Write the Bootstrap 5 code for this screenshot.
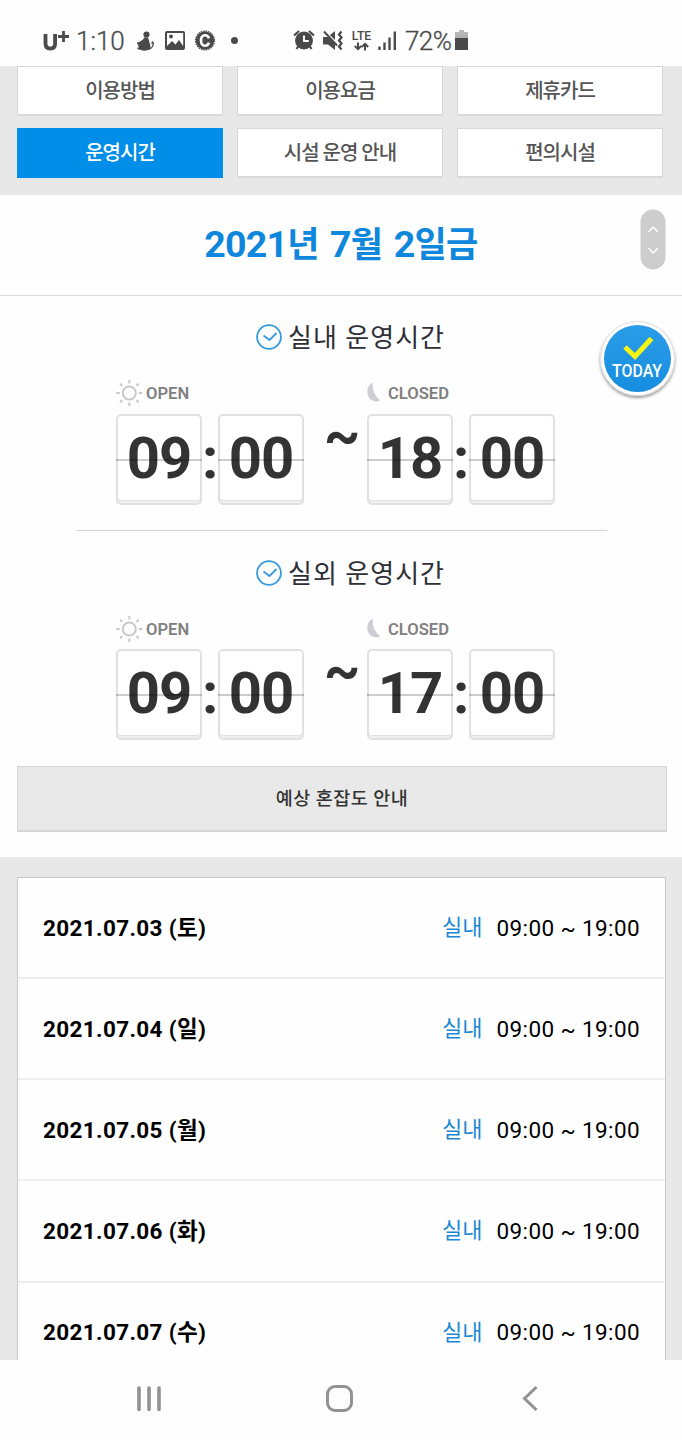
<!DOCTYPE html>
<html lang="ko">
<head>
<meta charset="utf-8">
<meta name="viewport" content="width=device-width, initial-scale=1">
<title>운영시간</title>
<link rel="stylesheet" href="https://cdn.jsdelivr.net/npm/bootstrap@5.3.0/dist/css/bootstrap.min.css">
<style>
body{font-family:Roboto,"Noto Sans CJK KR",sans-serif;background:#fefefe;color:#000;height:1440px;overflow:hidden;line-height:1}
svg{display:block;flex:none}
.status{height:66px;padding:16px 0 0 43px;color:#4a4a4a;white-space:nowrap}
.status>*{height:50px;flex:none}
.uplus{width:33px}
.clock{width:61px;font-size:26px;font-weight:300;-webkit-text-stroke:.3px #4a4a4a}
.pct{width:50px;font-size:26px;font-weight:300;letter-spacing:-.6px;-webkit-text-stroke:.3px #4a4a4a}
.tabs{height:129px;background:#e8e8e8;padding:0 18px 0 17px}
.tabgrid{display:grid;grid-template-columns:repeat(3,206px);column-gap:14px;row-gap:12px;grid-template-rows:50px 50px}
.tab{background:#fff;border:1px solid #d8d8d8;border-bottom-width:2px;border-radius:0;color:#555;font-size:20px;font-weight:500;letter-spacing:-1px;padding:1px 0 0;line-height:1;display:flex;align-items:center;justify-content:center}
.tab.on{background:#008ee8;border-color:#008ee8;color:#fff}
.daybar{height:101px;border-bottom:1px solid #d8d8d8}
.daybar h1{font-size:37.5px;font-weight:700;color:#0f87dc;letter-spacing:-.8px;word-spacing:2.8px;margin:0;line-height:1}
.daybar .ko{font-size:35px;letter-spacing:-.6px}
.spin{position:absolute;left:640px;top:14px}
.today{position:absolute;left:594px;top:20px}
.session{height:235px;width:531px;margin:0 auto 0 76px;padding-top:23px}
.session.first{border-bottom:1px solid #d4d4d4}
.session.second{padding-top:24px}
.session h2{font-size:26px;font-weight:400;color:#2f2f36;margin:0;height:36px;line-height:36px;letter-spacing:1px;padding-left:180px;gap:6px}
.session h2 span{padding-top:2px}
.lab{height:30px;margin-top:23px;font-size:16.6px;font-weight:600;color:#808080;padding-left:40px;}
.lab span{padding-top:2px}
.lab .o{width:221px}
.lab .gap-s{width:30px}
.flips{padding-left:40px;margin-top:6px;height:91px;font-weight:700;color:#333}
.flip{width:86px;height:91px;border:2px solid #e1e1e1;border-radius:5px;background:#fff;box-shadow:inset 0 -2px #efefef,inset 0 -3px #e1e1e1;font-size:58px;line-height:84px;text-align:center;letter-spacing:-1px;position:relative;flex:none}
.flip::after{content:"";position:absolute;left:-2px;right:-2px;top:43px;height:2px;background:rgba(0,0,0,.2)}
.colon{width:16px;font-size:58px;line-height:88px;text-align:center;flex:none}
.tilde{width:63px;flex:none;font-size:56px;line-height:42px;padding-left:20px}
.second .flips{margin-top:5px}
.crowd{margin:0 16px 25px 17px;height:66px;border:1px solid #d6d6d6;border-bottom-width:2px;background:#e9e9e9;border-radius:0;color:#333;font-size:18.500px;font-weight:500;line-height:1;width:650px;padding:1px 0 0;letter-spacing:.45px}
.days{height:503px;background:#e8e8e8;padding:20px 16px 0 17px;overflow:hidden}
.days .list-group{border:1px solid #c8c8c8;border-bottom:0}
.day{height:101.15px;border-bottom:2px solid #eceeef;background:#fefefe;padding:1px 25px 0 25px}
.day b{font-size:22.5px;font-weight:700;letter-spacing:.35px}
.day .in{font-size:22px;color:#1b88d4;margin-right:14px}
.day .hr{font-size:22.5px;letter-spacing:.38px}
.navb{height:80px;background:#fdfdfd}
</style>
</head>
<body>
<header class="status d-flex align-items-center">
  <span class="uplus"><svg width="30" height="50" viewBox="43 16 30 50"><path d="M45.500 34v9.500q0 5 4.800 5t4.800-5V34" fill="none" stroke="#4a4a4a" stroke-width="3.800"/><path d="M63.500 31v11M58 36.500h11" stroke="#4a4a4a" stroke-width="2.800"/></svg></span>
  <span class="clock d-flex align-items-center">1:10</span>
  <svg width="156" height="50" viewBox="137 16 156 50" fill="#4a4a4a">
    <circle cx="146.500" cy="34.500" r="3.100"/><path d="M143.500 37.500h4.500l1 3 1 4q1 2 0 3.500 2.500-1 2.500-4.500l-1.500.5 1.200-3 1.800 1.500q0 5-4 7-5 2-9 .5-4 0-4.500-3 1 1 2.500.5-1.500-1.500-.5-3.500l-1.700.5.200-2q2-.5 4-1.500l3-2.500z"/>
    <path fill-rule="evenodd" d="M167 31h16q2 0 2 2v15q0 2-2 2h-16q-2 0-2-2V33q0-2 2-2zm0 2v13l5-5 3.500 3.500L179 40l4.200 6V33z"/><circle cx="171" cy="36.500" r="1.900"/>
    <circle cx="205" cy="40.500" r="9.200"/><circle cx="205" cy="40.500" r="9.500" fill="none" stroke="#4a4a4a" stroke-width="1.200" stroke-dasharray="1.500 1"/>
    <path d="M209 38.300q-1-3-4-3-4 0-4 5.200t4 5.200q3 0 4-3" fill="none" stroke="#fff" stroke-width="2.600"/>
    <circle cx="234.500" cy="40.500" r="3.500"/>
  </svg>
  <svg width="112" height="50" viewBox="293 16 112 50" fill="#4a4a4a" stroke="#4a4a4a">
    <circle cx="304" cy="40.500" r="9" stroke="none"/><path d="M294 35.500l5-4.500M314 35.500l-5-4.500M298.500 46l-2 3M309.500 46l2 3" stroke-width="2.200"/><path d="M304 35.500v5.500h4.800" fill="none" stroke="#fff" stroke-width="1.900"/>
    <path stroke="none" d="M323 37h5l7 7v6l-7-5.500h-5zM330 35l5-4v9z"/><path d="M324 31.500L337 45.500" stroke-width="2"/><path d="M341.500 31.500l-2.500 3 2.500 3-2.500 3 2.500 3-2.500 3 2.500 3" fill="none" stroke-width="2.200"/>
    <text x="351.800" y="39.800" font-size="12.500" font-weight="500" stroke="none" font-family="Roboto" textLength="19.500" lengthAdjust="spacingAndGlyphs">LTE</text>
    <path d="M358 42.500v7M354.800 46l3.200 3.200 3.200-3.200M365 50.500v-7M361.800 47l3.200-3.200 3.200 3.200" fill="none" stroke-width="2"/>
    <path d="M379.500 46.500v3.500M384.500 42.500v7.500M389.500 37.500v12.500M394.800 31.500v18.500" stroke-width="2.400"/>
  </svg>
  <span class="pct d-flex align-items-center">72%</span>
  <svg width="14" height="50" viewBox="455 16 14 50"><path d="M459 30h5v2h4v3h-13v-3h4z" fill="#b8b8b8"/><path d="M455 35h13v3h-13z" fill="#b0b0b0"/><path d="M455 38h13V50h-13z" fill="#4a4a4a"/></svg>
</header>

<nav class="tabs"><div class="tabgrid">
  <a class="tab btn">이용방법</a><a class="tab btn">이용요금</a><a class="tab btn">제휴카드</a>
  <a class="tab btn on">운영시간</a><a class="tab btn">시설 운영 안내</a><a class="tab btn">편의시설</a>
</div></nav>

<section class="daybar d-flex align-items-center justify-content-center position-relative">
  <h1>2021<span class="ko">년</span> 7<span class="ko">월</span> 2<span class="ko">일금</span></h1>
  <svg class="spin" width="26" height="62" viewBox="0 0 26 62"><rect x=".5" y=".5" width="25" height="60" rx="12.500" fill="#cdcdcd"/><path d="M8.500 23l4.700-5 4.700 5M8.500 39l4.700 5 4.700-5" fill="none" stroke="#fff" stroke-width="1.400"/></svg>
</section>

<main class="position-relative">
  <svg class="today" width="88" height="90" viewBox="594 316 88 90">
    <defs><linearGradient id="tg" x2="0" y2="1"><stop stop-color="#2b9de8"/><stop offset="1" stop-color="#168de0"/></linearGradient><filter id="sh" x="-20%" y="-20%" width="140%" height="140%"><feDropShadow dx="0" dy="2" stdDeviation="1.500" flood-opacity=".4"/></filter></defs>
    <circle cx="637.500" cy="358.500" r="37" fill="#fff" stroke="#ddd" filter="url(#sh)"/><circle cx="637.500" cy="358.500" r="33.500" fill="url(#tg)"/>
    <path d="M625 347l10 9.500 16.500-18" fill="none" stroke="#f6f613" stroke-width="5"/>
    <text x="612" y="377" font-family="Roboto" font-weight="500" font-size="18.500" fill="#fff" textLength="50" lengthAdjust="spacingAndGlyphs">TODAY</text>
  </svg>

  <div class="session first">
    <h2 class="d-flex align-items-center"><svg width="26" height="26" viewBox="0 0 26 26" fill="none" stroke="#369ade" stroke-width="1.800"><circle cx="13" cy="13" r="11.900"/><path d="M7.500 11.500l6 4.500 7-7"/></svg><span>실내 운영시간</span></h2>
    <div class="lab d-flex align-items-center">
      <svg class="gap-s" height="28" viewBox="0 0 30 28" fill="none" stroke="#c8c8ca" stroke-width="2"><circle cx="13.300" cy="14" r="6.500"/><path d="M13.300 1v3.500M13.300 23.500V27M.3 14h3.500M22.800 14h3.500M4 4.700l2.200 2.200M20.400 21.100l2.200 2.200M22.600 4.700l-2.200 2.200M6.200 21.100L4 23.300"/></svg>
      <span class="o">OPEN</span>
      <svg class="moon" width="21" height="28" viewBox="0 0 21 28"><path d="M5.500 3.500C-1 7-1.500 17 4.500 21q4 2.500 8.500.500Q5 15 5.500 3.500z" fill="#cdcdd3"/></svg>
      <span>CLOSED</span>
    </div>
    <div class="flips d-flex"><div class="flip">09</div><div class="colon">:</div><div class="flip">00</div><div class="tilde">~</div><div class="flip">18</div><div class="colon">:</div><div class="flip">00</div></div>
  </div>

  <div class="session second">
    <h2 class="d-flex align-items-center"><svg width="26" height="26" viewBox="0 0 26 26" fill="none" stroke="#369ade" stroke-width="1.800"><circle cx="13" cy="13" r="11.900"/><path d="M7.500 11.500l6 4.500 7-7"/></svg><span>실외 운영시간</span></h2>
    <div class="lab d-flex align-items-center">
      <svg class="gap-s" height="28" viewBox="0 0 30 28" fill="none" stroke="#c8c8ca" stroke-width="2"><circle cx="13.300" cy="14" r="6.500"/><path d="M13.300 1v3.500M13.300 23.500V27M.3 14h3.500M22.800 14h3.500M4 4.700l2.200 2.200M20.400 21.100l2.200 2.200M22.600 4.700l-2.200 2.200M6.200 21.100L4 23.300"/></svg>
      <span class="o">OPEN</span>
      <svg class="moon" width="21" height="28" viewBox="0 0 21 28"><path d="M5.500 3.500C-1 7-1.500 17 4.500 21q4 2.500 8.500.500Q5 15 5.500 3.500z" fill="#cdcdd3"/></svg>
      <span>CLOSED</span>
    </div>
    <div class="flips d-flex"><div class="flip">09</div><div class="colon">:</div><div class="flip">00</div><div class="tilde">~</div><div class="flip">17</div><div class="colon">:</div><div class="flip">00</div></div>
  </div>
  <button class="crowd btn d-block">예상 혼잡도 안내</button>
</main>

<section class="days">
  <div class="list-group rounded-0">
    <div class="day d-flex align-items-center"><b class="me-auto">2021.07.03 (토)</b><span class="in">실내</span><span class="hr">09:00 ~ 19:00</span></div>
    <div class="day d-flex align-items-center"><b class="me-auto">2021.07.04 (일)</b><span class="in">실내</span><span class="hr">09:00 ~ 19:00</span></div>
    <div class="day d-flex align-items-center"><b class="me-auto">2021.07.05 (월)</b><span class="in">실내</span><span class="hr">09:00 ~ 19:00</span></div>
    <div class="day d-flex align-items-center"><b class="me-auto">2021.07.06 (화)</b><span class="in">실내</span><span class="hr">09:00 ~ 19:00</span></div>
    <div class="day d-flex align-items-center"><b class="me-auto">2021.07.07 (수)</b><span class="in">실내</span><span class="hr">09:00 ~ 19:00</span></div>
  </div>
</section>

<footer class="navb">
  <svg width="682" height="80" viewBox="0 1360 682 80" fill="none" stroke="#929292" stroke-width="3"><path d="M139 1388v21.500M149 1388v21.500M159 1388v21.500" stroke-width="3.600" stroke-linecap="round"/><rect x="327.500" y="1386.500" width="24" height="24" rx="7.500"/><path d="M536.500 1387l-12 11.500 12 11.500"/></svg>
</footer>
<script src="https://cdn.jsdelivr.net/npm/bootstrap@5.3.0/dist/js/bootstrap.bundle.min.js"></script>
</body>
</html>
